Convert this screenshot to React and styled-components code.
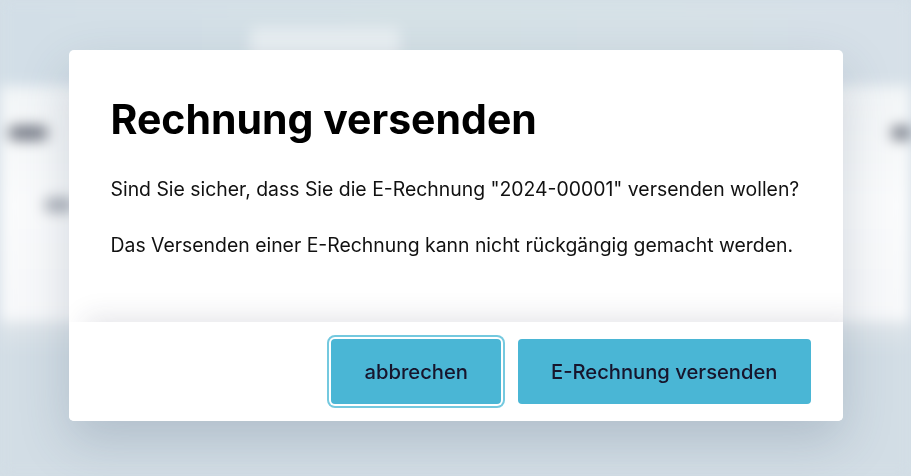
import React from "react";
import styled, { createGlobalStyle } from "styled-components";

const GlobalStyle = createGlobalStyle`
    html, body {
        margin: 0;
        padding: 0;
        height: 100%;
        overflow: hidden;
    }
    body {
        font-family: "Inter", "Liberation Sans", sans-serif;
        background: #d3dee6;
    }
`;

const Page = styled.div`
    height: 476px;
    display: flex;
    flex-direction: column;
    filter: blur(7px);
    background: #d4e0e7;
`;
const TopBar = styled.div`
    height: 86px;
    display: flex;
    align-items: flex-start;
    padding: 28px 0 0 250px;
    box-sizing: border-box;
    background: linear-gradient(90deg, #d2dee7 0%, #d5e1e6 50%, #d6e0e8 100%);
`;
const Tab = styled.div`
    width: 150px;
    height: 30px;
    background: #e9eff2;
    border-radius: 6px;
`;
const Card = styled.div`
    height: 195px;
    background: linear-gradient(180deg, #f2f5f7 0%, #fafbfc 50%, #f7f8fa 100%);
    display: flex;
    flex-direction: column;
    gap: 58px;
    padding: 40px 0 0 8px;
`;
const BlobRow = styled.div`
    display: flex;
    justify-content: space-between;
`;
const Blob = styled.div`
    width: ${(p) => p.w}px;
    height: 14px;
    margin-left: ${(p) => p.x || 0}px;
    border-radius: 7px;
    background: ${(p) => p.c || "#6f7480"};
`;
const Bottom = styled.div`
    flex: 1;
    background: linear-gradient(180deg, #dfe5ea 0%, #d2dde5 20%, #d2dde5 100%);
`;

const Overlay = styled.div`
    position: fixed;
    inset: 0;
    display: flex;
    justify-content: center;
    align-items: flex-start;
    padding-top: 50px;
`;
const Dialog = styled.div`
    width: 774px;
    background: #fff;
    border-radius: 5px;
    overflow: hidden;
    box-shadow: 0 20px 50px rgba(60, 80, 110, 0.22);
    display: flex;
    flex-direction: column;
`;
const Body = styled.div`
    padding: 45px 42px 0;
    height: 272px;
    box-sizing: border-box;
`;
const Title = styled.h2`
    margin: 0 0 34px;
    font-size: 41px;
    font-weight: 700;
    line-height: 48px;
    color: #000;
`;
const Text = styled.p`
    margin: 0 0 32px;
    font-size: 19.4px;
    line-height: 24px;
    color: #111;
`;
const Footer = styled.div`
    position: relative;
    background: #fff;
    height: 99px;
    display: flex;
    justify-content: flex-end;
    align-items: center;
    gap: 17px;
    padding: 0 32px 0 0;
    box-shadow: 16px -4px 26px rgba(40, 40, 70, 0.13);
`;
const Button = styled.button`
    height: 65px;
    padding: 0 ${(p) => p.pad}px;
    border: none;
    border-radius: 4px;
    background: #4ab6d5;
    color: #17152c;
    font-family: "Inter", "Liberation Sans", sans-serif;
    font-size: 20.2px;
    font-weight: 500;
    cursor: pointer;
    box-shadow: ${(p) =>
        p.focused ? "0 0 0 2px #fff, 0 0 0 4px #74c9df" : "none"};
`;

export default function App() {
    return (
        <>
            <GlobalStyle />
            <Page>
                <TopBar>
                    <Tab />
                </TopBar>
                <Card>
                    <BlobRow>
                        <Blob w={40} />
                        <Blob w={20} />
                    </BlobRow>
                    <Blob w={30} x={36} c="#a6abb4" />
                </Card>
                <Bottom />
            </Page>
            <Overlay>
                <Dialog role="dialog">
                    <Body>
                        <Title>Rechnung versenden</Title>
                        <Text>
                            Sind Sie sicher, dass Sie die E-Rechnung
                            "2024-00001" versenden wollen?
                        </Text>
                        <Text>
                            Das Versenden einer E-Rechnung kann nicht
                            rückgängig gemacht werden.
                        </Text>
                    </Body>
                    <Footer>
                        <Button focused pad={33}>
                            abbrechen
                        </Button>
                        <Button pad={33}>E-Rechnung versenden</Button>
                    </Footer>
                </Dialog>
            </Overlay>
        </>
    );
}
